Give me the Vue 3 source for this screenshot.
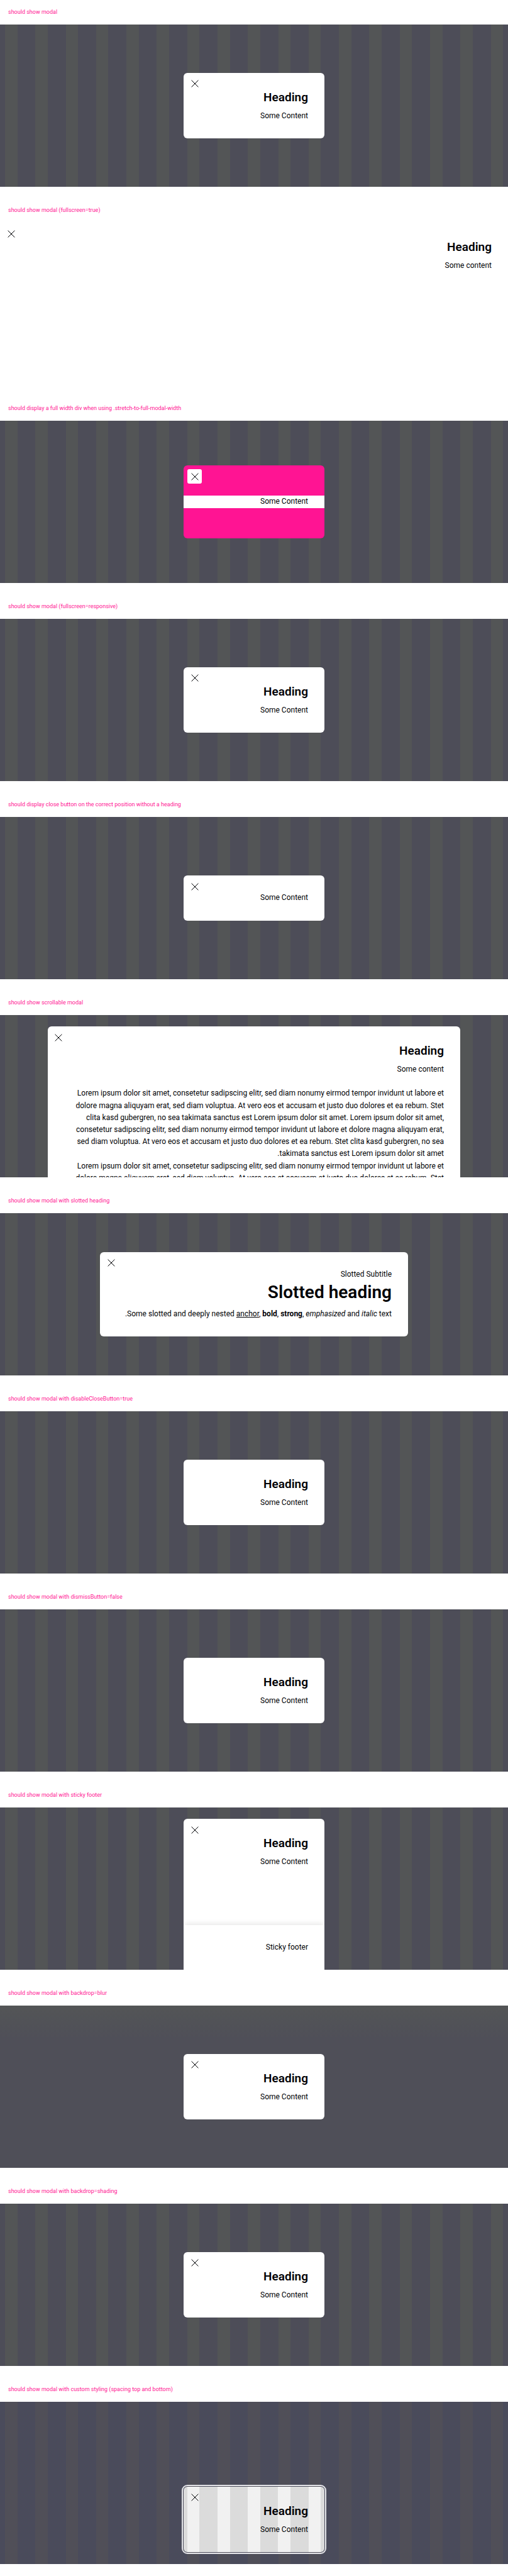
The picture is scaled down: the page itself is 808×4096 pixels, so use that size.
<script setup>
const lorem =
  'Lorem ipsum dolor sit amet, consetetur sadipscing elitr, sed diam nonumy eirmod tempor invidunt ut labore et dolore magna aliquyam erat, sed diam voluptua. At vero eos et accusam et justo duo dolores et ea rebum. Stet clita kasd gubergren, no sea takimata sanctus est Lorem ipsum dolor sit amet. Lorem ipsum dolor sit amet, consetetur sadipscing elitr, sed diam nonumy eirmod tempor invidunt ut labore et dolore magna aliquyam erat, sed diam voluptua. At vero eos et accusam et justo duo dolores et ea rebum. Stet clita kasd gubergren, no sea takimata sanctus est Lorem ipsum dolor sit amet.'

const cases = [
  { title: 'should show modal', heading: 'Heading', text: 'Some Content', close: true },
  { title: 'should show modal (fullscreen=true)', kind: 'fullscreen', heading: 'Heading', text: 'Some content', close: true },
  { title: 'should display a full width div when using .stretch-to-full-modal-width', kind: 'stretch', text: 'Some Content', close: true },
  { title: 'should show modal (fullscreen=responsive)', heading: 'Heading', text: 'Some Content', close: true },
  { title: 'should display close button on the correct position without a heading', text: 'Some Content', close: true },
  { title: 'should show scrollable modal', kind: 'scrollable', heading: 'Heading', text: 'Some content', close: true },
  { title: 'should show modal with slotted heading', kind: 'slotted', close: true },
  { title: 'should show modal with disableCloseButton=true', heading: 'Heading', text: 'Some Content' },
  { title: 'should show modal with dismissButton=false', heading: 'Heading', text: 'Some Content' },
  { title: 'should show modal with sticky footer', kind: 'sticky', heading: 'Heading', text: 'Some Content', close: true },
  { title: 'should show modal with backdrop=blur', kind: 'blur', heading: 'Heading', text: 'Some Content', close: true },
  { title: 'should show modal with backdrop=shading', heading: 'Heading', text: 'Some Content', close: true },
  { title: 'should show modal with custom styling (spacing top and bottom)', kind: 'custom', heading: 'Heading', text: 'Some Content', close: true },
]
</script>

<template>
  <main class="page">
    <section v-for="item in cases" :key="item.title" class="case">
      <p class="title">{{ item.title }}</p>
      <div class="frame" :class="item.kind" dir="rtl">
        <div class="modal" role="dialog" :aria-label="item.title">
          <button v-if="item.close" class="close" type="button" aria-label="Dismiss modal">
            <svg viewBox="0 0 12 12" width="12" height="12" aria-hidden="true">
              <path d="M0.6 0.6 11.4 11.4M11.4 0.6 0.6 11.4" fill="none" stroke="currentColor" stroke-width="1" />
            </svg>
          </button>

          <div v-if="item.kind === 'slotted'" class="body">
            <p>Slotted Subtitle</p>
            <h2 class="large">Slotted heading</h2>
            <p>
              Some slotted and deeply nested <a href="#">anchor</a>, <b>bold</b>, <strong>strong</strong>,
              <em>emphasized</em> and <i>italic</i> text.
            </p>
          </div>
          <div v-else class="body">
            <h2 v-if="item.heading">{{ item.heading }}</h2>
            <p class="content">{{ item.text }}</p>
            <template v-if="item.kind === 'scrollable'">
              <br />
              <p v-for="n in 2" :key="n">{{ lorem }}</p>
            </template>
          </div>

          <footer v-if="item.kind === 'sticky'" class="footer">Sticky footer</footer>
        </div>
      </div>
    </section>
  </main>
</template>

<style>
body {
  margin: 0;
  background: #fff;
}
</style>

<style scoped>
.page {
  font-family: Roboto, "Liberation Sans", sans-serif;
  font-size: 12px;
  line-height: 1.6;
  color: #010205;
}

.case {
  padding-bottom: 18px;
}

.title {
  margin: 0;
  padding: 0 13px;
  font-size: 9px;
  line-height: 39px;
  color: #ff1493;
}

.frame {
  box-sizing: border-box;
  display: flex;
  align-items: center;
  justify-content: center;
  height: 258px;
  overflow: hidden;
  background: repeating-linear-gradient(90deg, #4d4d58 0 1%, #535556 1% 3.42%, #4d4d58 3.42% 5.975%);
}

.modal {
  position: relative;
  box-sizing: border-box;
  display: flex;
  flex-direction: column;
  min-width: 224px;
  border-radius: 6px;
  background: #fff;
}

.body {
  padding: 26px;
}

.body p {
  margin: 0;
}

h2 {
  margin: 0 0 7px;
  font-size: 19px;
  font-weight: 600;
  line-height: 26px;
}

h2.large {
  font-size: 28px;
  line-height: 37px;
}

a {
  color: inherit;
}

.close {
  position: absolute;
  top: 6px;
  left: 6px;
  display: flex;
  align-items: center;
  justify-content: center;
  width: 23px;
  height: 23px;
  padding: 0;
  border: 0;
  border-radius: 3px;
  background: transparent;
  color: #010205;
}

.fullscreen {
  background: #fff;
}

.fullscreen .modal {
  flex: 1;
  align-self: stretch;
  border-radius: 0;
}

.stretch .modal {
  background: #ff1493;
}

.stretch .close {
  background: #fff;
}

.stretch .body {
  padding: 48px 0;
}

.stretch .content {
  padding: 0 26px;
  background: #fff;
}

.scrollable {
  align-items: flex-start;
  padding-top: 18px;
}

.scrollable .modal {
  width: 81.2%;
}

.scrollable .body {
  padding-left: 34px;
}

.slotted .modal {
  min-width: 490px;
}

.sticky {
  align-items: stretch;
  padding-top: 18px;
}

.sticky .modal {
  border-radius: 6px 6px 0 0;
}

.sticky .body {
  flex: 1;
}

.footer {
  padding: 26px;
  background: #fff;
  box-shadow: 0 -4px 8px -2px rgba(0, 0, 0, 0.1);
  clip-path: inset(-16px 0 0 0);
}

.blur {
  background: linear-gradient(#535556, #4f4f58 20%);
}

.custom {
  align-items: flex-end;
  padding-bottom: 19px;
  background: repeating-linear-gradient(90deg, #4a4b5b 0 1%, #504f58 1% 3.42%, #4a4b5b 3.42% 5.975%);
}

.custom .modal {
  outline: 2px solid #e6e6ea;
  outline-offset: 1px;
  background: repeating-linear-gradient(90deg, #dbdbdb 0 2.5%, #f1f1f1 2.5% 11.3%, #dbdbdb 11.3% 21.55%);
}
</style>
